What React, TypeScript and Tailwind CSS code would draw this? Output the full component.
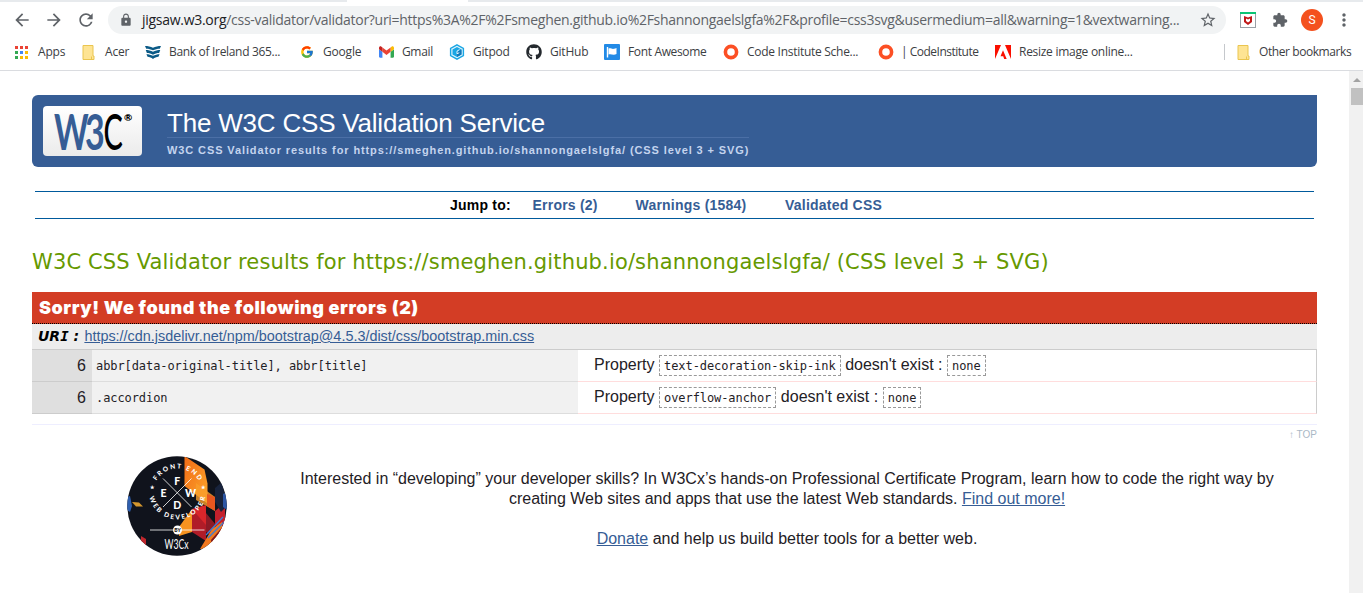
import React from "react";
import { FcGoogle } from "react-icons/fc";
import { FaGithub } from "react-icons/fa";
import { MdArrowBack, MdArrowForward, MdRefresh, MdLock, MdStarOutline, MdExtension, MdMoreVert } from "react-icons/md";

function AppsIcon() {
  const colors = ["#ea4335", "#ea4335", "#ea4335", "#34a853", "#4285f4", "#fbbc05", "#34a853", "#fbbc05", "#fbbc05"];
  return (
    <svg width="13" height="13" viewBox="0 0 13 13" shapeRendering="crispEdges">
      {colors.map((c, i) => (
        <rect key={i} x={(i % 3) * 5} y={Math.floor(i / 3) * 5} width="3" height="3" fill={c} />
      ))}
    </svg>
  );
}

function FolderIcon() {
  return (
    <svg width="13" height="15" viewBox="0 0 13 15">
      <path d="M1 .5h10v10.500h1v3.500H1z" fill="#fee493" stroke="#eac54f" />
      <path d="M9.500 14V11.500" stroke="#eac54f" />
    </svg>
  );
}

function BankIcon() {
  return (
    <svg width="17" height="16" viewBox="0 0 17 16" fill="#0b5a86">
      <path d="M0 1.500c3 0 6 .5 8.500 1.900C11 2 14 1.500 17 1.500l-1.300 3c-2.600 0-5 .5-7.200 1.700C6.300 5 3.900 4.500 1.300 4.500z" />
      <path d="M.8 6c2.700 0 5.400.5 7.700 1.800C10.800 6.500 13.500 6 16.200 6L15 9c-2.300 0-4.500.6-6.500 1.800C6.500 9.600 4.300 9 2 9z" />
      <path d="M1.500 10.300c2.400 0 4.900.5 7 1.800 2.100-1.300 4.600-1.800 7-1.800l-1.200 2.700c-2.100.1-4.100.9-5.800 2.400-1.700-1.500-3.700-2.300-5.800-2.400z" />
    </svg>
  );
}

function GmailIcon() {
  return (
    <svg width="15" height="12" viewBox="52 42 88 66">
      <path fill="#4285f4" d="M58 108h14V74L52 59v43c0 3.320 2.690 6 6 6" />
      <path fill="#34a853" d="M120 108h14c3.320 0 6-2.690 6-6V59l-20 15" />
      <path fill="#fbbc04" d="M120 48v26l20-15v-8c0-7.420-8.470-11.650-14.400-7.200" />
      <path fill="#ea4335" d="M72 74V48l24 18 24-18v26L96 92" />
      <path fill="#c5221f" d="M52 51v8l20 15V48l-5.600-4.200c-5.940-4.450-14.400-.22-14.400 7.200" />
    </svg>
  );
}

function GitpodIcon() {
  return (
    <svg width="16" height="16" viewBox="0 0 16 16">
      <path d="M8 .9l6.400 3.500v7.200L8 15.100l-6.400-3.500V4.400z" fill="#dff3fc" stroke="#1aa6e4" strokeWidth="1.400" />
      <path d="M8 3l4.500 2.400v5.200L8 13l-4.500-2.400V5.400z" fill="#1aa6e4" />
      <path d="M8 8l4.500-2.600v5.200L8 13z" fill="#1477b8" />
      <path d="M10.500 5.600L8 7.200v2.600l2.300-1.100" stroke="#fff" strokeWidth=".9" fill="none" />
    </svg>
  );
}

function FlagIcon() {
  return (
    <svg width="16" height="16" viewBox="0 0 16 16">
      <rect width="16" height="16" rx="1" fill="#228ae6" />
      <path d="M3.500 3v10.500" stroke="#fff" strokeWidth="1.400" />
      <path d="M4.500 4.500c2-.9 3.500.9 5.500.3.900-.2 1.600-.5 2.500-.8V10c-1 .5-1.700.7-2.700.8-2 0-3.300-1-5.300-.2z" fill="#fff" />
    </svg>
  );
}

function AdobeIcon() {
  return (
    <svg width="16" height="14" viewBox="0 0 16 14" fill="#fa0f00">
      <path d="M0 0h6L0 14zM16 0h-6l6 14zM8 5.200L11.700 14H9.200L8.200 11.200H5.500z" />
    </svg>
  );
}

function ShieldExtension() {
  return (
    <svg width="16" height="16" viewBox="0 0 16 16">
      <rect x=".5" y=".5" width="15" height="15" fill="#fff" stroke="#9aa0a6" />
      <rect width="16" height="2" fill="#0bc574" />
      <path d="M4 4l4 1.500L12 4v6l-4 3-4-3z" fill="#c01818" />
      <path d="M6 6.500l2 .9 2-.9V9l-2 1.400L6 9z" fill="#fff" />
    </svg>
  );
}

function Ring() {
  return (
    <svg width="16" height="16" viewBox="0 0 16 16">
      <circle cx="8" cy="8" r="5.600" fill="none" stroke="#fc4f24" strokeWidth="3.600" />
    </svg>
  );
}

function Bookmark({ icon, label, slot, text }: { icon: React.ReactNode; label: string; slot: string; text: string }) {
  return (
    <div className={`flex h-5 shrink-0 items-center ${slot}`}>
      <span className="flex w-4 shrink-0 items-center justify-center">{icon}</span>
      <span className={`whitespace-pre ${text}`}>{label}</span>
    </div>
  );
}

function Browser() {
  return (
    <header className="shrink-0 font-['Open_Sans','Noto_Sans',sans-serif]">
      <div className="flex h-[2px]">
        <div className="w-[347px] bg-[#e7eaed]" />
        <div className="w-[121px] bg-white" />
        <div className="grow bg-[#e7eaed]" />
      </div>
      <div className="flex h-9 items-center text-[#5f6368]">
        <MdArrowBack className="ml-3 size-5 shrink-0" />
        <MdArrowForward className="ml-3 size-5 shrink-0" />
        <MdRefresh className="ml-3 size-5 shrink-0" />
        <div className="ml-3 flex h-7 w-[1118px] shrink-0 items-center rounded-full bg-[#f1f3f4]">
          <MdLock className="ml-[11px] size-[14px] shrink-0" />
          <div className="ml-[9px] w-[1057px] whitespace-nowrap text-[14px] leading-7 tracking-[-0.285px]">
            <span className="text-[#202124]">jigsaw.w3.org</span>/css-validator/validator?uri=https%3A%2F%2Fsmeghen.github.io%2Fshannongaelslgfa%2F&amp;profile=css3svg&amp;usermedium=all&amp;warning=1&amp;vextwarning...
          </div>
          <MdStarOutline className="size-[18px] shrink-0" />
        </div>
        <span className="ml-[14px] shrink-0"><ShieldExtension /></span>
        <MdExtension className="ml-4 size-4 shrink-0" />
        <div className="ml-[13px] flex size-[22px] shrink-0 items-center justify-center rounded-full bg-[#f4511e] font-['Roboto',sans-serif] text-[12px] text-white">S</div>
        <MdMoreVert className="ml-[11px] size-5 shrink-0" />
      </div>
      <div className="flex h-[33px] items-center border-b border-[#dadce0] pb-[4px] text-[12px] text-[#3c4043]">
        <Bookmark slot="ml-[13px] w-[67px]" text="ml-[9px] tracking-[-0.2px]" icon={<AppsIcon />} label="Apps" />
        <Bookmark slot="w-[65px]" text="ml-[9px] tracking-[-0.2px]" icon={<FolderIcon />} label="Acer" />
        <Bookmark slot="w-[154px]" text="ml-2 tracking-[-0.32px]" icon={<BankIcon />} label="Bank of Ireland 365..." />
        <Bookmark slot="w-[79px]" text="ml-2 tracking-[-0.2px]" icon={<FcGoogle className="size-[14px]" />} label="Google" />
        <Bookmark slot="w-[71px]" text="ml-2 tracking-[-0.35px]" icon={<GmailIcon />} label="Gmail" />
        <Bookmark slot="w-[77px]" text="ml-2 tracking-[-0.2px]" icon={<GitpodIcon />} label="Gitpod" />
        <Bookmark slot="w-[78px]" text="ml-2 tracking-[-0.2px]" icon={<FaGithub className="size-4 text-[#24292e]" />} label="GitHub" />
        <Bookmark slot="w-[119px]" text="ml-2 tracking-[-0.35px]" icon={<FlagIcon />} label="Font Awesome" />
        <Bookmark slot="w-[155px]" text="ml-2 tracking-[-0.28px]" icon={<Ring />} label="Code Institute Sche..." />
        <Bookmark slot="w-[117px]" text="ml-[7px] tracking-[-0.5px]" icon={<Ring />} label="| CodeInstitute" />
        <Bookmark slot="w-[229px]" text="ml-2 tracking-[-0.28px]" icon={<AdobeIcon />} label="Resize image online..." />
        <div className="h-4 w-px bg-[#c5c8cc]" />
        <Bookmark slot="ml-[10px]" text="ml-2 tracking-[-0.42px]" icon={<FolderIcon />} label="Other bookmarks" />
      </div>
    </header>
  );
}

function W3CLogo() {
  return (
    <div className="ml-[11px] h-[50px] w-[99px] shrink-0 rounded-[4px] bg-linear-to-b from-white to-[#ebebeb]">
      <svg width="99" height="50" viewBox="0 0 99 50" className="font-['Lato',sans-serif]">
        <text transform="translate(11 43.500) scale(.66 1)" fontSize="50" fontWeight="700" fill="#365d95">W</text>
        <text transform="translate(42 43.500) scale(.68 1)" fontSize="50" fontWeight="700" fill="#365d95">3</text>
        <text transform="translate(60.500 43.500) scale(.58 1)" fontSize="50" fontWeight="500" fill="#000">C</text>
        <text x="81" y="14.500" fontSize="10" fontWeight="900" fill="#000">®</text>
      </svg>
    </div>
  );
}

function Code({ children }: { children: React.ReactNode }) {
  return (
    <code className="mt-[1px] inline-block h-[21px] border border-dashed border-[#999] px-1 font-['DejaVu_Sans_Mono',monospace] text-[12px] leading-[21px] tracking-[-0.08px]">
      {children}
    </code>
  );
}

function ErrorRow({ selector, property }: { selector: string; property: string }) {
  return (
    <div className="flex h-8 text-[#1f2126]">
      <div className="w-[60px] border-b border-[#ccc] bg-[#dfdfdf] pr-[6px] text-right leading-[31px]">6</div>
      <div className="w-[486px] border-b border-[#ddd] bg-[#f1f1f1] pl-1 font-['DejaVu_Sans_Mono',monospace] text-[12px] leading-[32px] tracking-[-0.08px]">{selector}</div>
      <div className="flex grow items-start gap-[4.600px] border-r border-b border-r-[#ccc] border-b-[#fdd] pt-1 pl-4 leading-[22px] whitespace-pre">
        <span>Property</span>
        <Code>{property}</Code>
        <span>doesn't exist :</span>
        <Code>none</Code>
      </div>
    </div>
  );
}

function Badge() {
  return (
    <svg width="100" height="100" viewBox="0 0 100 100" className="shrink-0 font-['Lato',sans-serif]">
      <defs>
        <clipPath id="disc"><circle cx="50" cy="50" r="49.700" /></clipPath>
        <path id="arcTop" d="M26 37a24.500 24.500 0 0 1 49 0" />
        <path id="arcLow" d="M22 35a28.500 28.500 0 0 0 57 0" />
        <linearGradient id="flame" x1="0" y1="0" x2="1" y2="1">
          <stop offset="0" stopColor="#f26b16" />
          <stop offset="1" stopColor="#fba72c" />
        </linearGradient>
      </defs>
      <g clipPath="url(#disc)">
        <rect width="100" height="100" fill="#10131c" />
        <path d="M57.500 0l20 13.500 3 14v20L57.500 30z" fill="url(#flame)" />
        <path d="M69 27l19 14v14L69 44z" fill="#f99d2a" opacity=".8" />
        <path d="M80 38l8 3v14l-8-5z" fill="#e8571f" />
        <path d="M88 55l10-8v26l-4 3-6-8z" fill="#c4202c" />
        <path d="M65 53l14 11v21l-14-9z" fill="#b01c28" />
        <path d="M65 53l14-4v20z" fill="#d9262b" />
        <path d="M79 57l10 12-4 12-6-5z" fill="#8d1a26" />
        <path d="M52 80V71l13-18v23z" fill="#f79320" />
        <path d="M73 93l12-20 10-7v15L82 92z" fill="#f0781e" />
        <path d="M84 84l14-16v14l-12 12z" fill="#7c1722" />
        <path d="M88 32l7-6 5 24-6 6-6-10z" fill="#18233c" />
        <path d="M96 38l4-2v18l-4-3z" fill="#2c56a5" />
        <path d="M79 79l17-18M81 82l16-16" stroke="#3d7dd4" strokeWidth="1.300" />
        <path d="M0 41l3-1 2 10-2 6-3-2z" fill="#2f5fae" />
        <path d="M5 46l7 .500 4 4H9z" fill="#d4972e" />
        <path d="M14 80l5 3v8l-5-5z" fill="#c0272d" />
      </g>
      <path d="M36 22.500l28.500 28.500M64.500 22.500L36 51M23 74h23M55 74h22.500" stroke="#fff" strokeWidth=".8" />
      <g fill="#fff" fontWeight="900" textAnchor="middle">
        <g fontSize="10.500"><text x="50.200" y="28.500">F</text><text x="36.500" y="40.500">E</text><text x="63.500" y="40.500">W</text><text x="50.200" y="52.700">D</text></g>
        <text fontSize="6.500" letterSpacing="1.700"><textPath href="#arcTop" startOffset="51%">FRONT END</textPath></text>
        <text fontSize="6.500" letterSpacing="1.900"><textPath href="#arcLow" startOffset="51%">WEB DEVELOPER</textPath></text>
        <text fontSize="5" x="24.700" y="32.500">★</text>
        <text fontSize="5" x="75.500" y="32.500">★</text>
      </g>
      <circle cx="50.500" cy="74" r="4.500" fill="#fff" />
      <text x="50.500" y="76" fontSize="5" fontWeight="900" fill="#111" textAnchor="middle">BY</text>
      <text x="49.500" y="92.500" fontSize="14" textLength="24" lengthAdjust="spacingAndGlyphs" fill="#fff" textAnchor="middle">W3Cx</text>
    </svg>
  );
}

export default function App() {
  return (
    <div className="flex h-[593px] w-[1363px] flex-col overflow-hidden bg-white font-['Liberation_Sans',Arial,sans-serif] text-[16px] text-[#1f2126]">
      <Browser />
      <div className="flex min-h-0 grow">
        <main className="min-w-0 grow pr-8 pl-8 pt-6">
          <div className="flex h-[72px] items-center rounded-[6px] rounded-tr-none bg-[#365d95]">
            <W3CLogo />
            <div className="ml-[25px] flex h-full flex-col">
              <h1 className="mt-[10px] h-[33px] w-[582px] border-b border-[#4b6fa6] text-[26px] leading-[37px] tracking-[-0.2px] whitespace-nowrap text-white">The W3C CSS Validation Service</h1>
              <p className="text-[11px] leading-[24px] font-bold tracking-[0.895px] whitespace-nowrap text-[#c4d4ee]">W3C CSS Validator results for https://smeghen.github.io/shannongaelslgfa/ (CSS level 3 + SVG)</p>
            </div>
          </div>
          <nav className="mx-[3px] mt-6 flex h-7 border-y border-[#005a9c] pl-[415px] text-[14px] leading-[27px] font-bold tracking-[0.22px] whitespace-nowrap text-[#365d95]">
            <span className="w-[82.500px] text-black">Jump to:</span>
            <a className="w-[103px]">Errors (2)</a>
            <a className="w-[149.500px]">Warnings (1584)</a>
            <a>Validated CSS</a>
          </nav>
          <h2 className="mt-[26px] h-[47px] font-['DejaVu_Sans',sans-serif] text-[21px] leading-[34px] tracking-[0.148px] whitespace-nowrap text-[#690]">W3C CSS Validator results for https://smeghen.github.io/shannongaelslgfa/ (CSS level 3 + SVG)</h2>
          <h3 className="h-8 border-b border-dotted border-black bg-[#d33d25] pl-[7px] font-['Inter',sans-serif] text-[18px] leading-[31px] font-black tracking-[0.55px] whitespace-nowrap text-white">Sorry! We found the following errors (2)</h3>
          <div className="flex h-[26px] border-b border-[#ccc] bg-[#ededed] pl-[6px] text-[14.400px] leading-[25px] whitespace-pre">
            <span className="w-[46.400px] font-['DejaVu_Sans',sans-serif] text-[14px] font-bold text-black italic">UR<span className="font-['DejaVu_Sans_Mono',monospace]">I</span> :</span>
            <a className="text-[#365d95] underline">https://cdn.jsdelivr.net/npm/bootstrap@4.5.3/dist/css/bootstrap.min.css</a>
          </div>
          <ErrorRow selector="abbr[data-original-title], abbr[title]" property="text-decoration-skip-ink" />
          <ErrorRow selector=".accordion" property="overflow-anchor" />
          <div className="mt-[10px] border-t border-[#eef] text-right text-[10px] leading-[20px] text-[#abb8c6]">↑ TOP</div>
          <div className="mt-[11px] flex pl-[95px]">
            <Badge />
            <div className="ml-[30px] w-[1060px] pt-[13px] text-center leading-5 whitespace-nowrap">
              <p>
                Interested in “developing” your developer skills? In W3Cx’s hands-on Professional Certificate Program, learn how to code the right way by
                <br />
                creating Web sites and apps that use the latest Web standards. <a className="text-[#365d95] underline">Find out more!</a>
              </p>
              <p className="mt-5"><a className="text-[#365d95] underline">Donate</a> and help us build better tools for a better web.</p>
            </div>
          </div>
        </main>
        <div className="flex w-[14px] shrink-0 flex-col items-end bg-[#f1f1f1]">
          <svg width="12" height="17" viewBox="0 0 12 17"><path d="M2 11l4-4 4 4z" fill="#a3a3a3" /></svg>
          <div className="h-[17px] w-3 bg-[#c1c1c1]" />
        </div>
      </div>
    </div>
  );
}
